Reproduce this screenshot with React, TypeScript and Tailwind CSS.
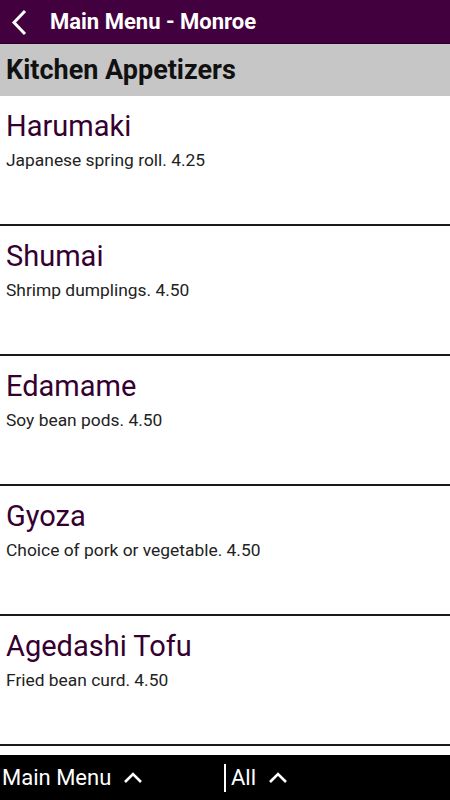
import React from 'react';

const items = [
  { name: 'Harumaki', desc: 'Japanese spring roll. 4.25' },
  { name: 'Shumai', desc: 'Shrimp dumplings. 4.50' },
  { name: 'Edamame', desc: 'Soy bean pods. 4.50' },
  { name: 'Gyoza', desc: 'Choice of pork or vegetable. 4.50' },
  { name: 'Agedashi Tofu', desc: 'Fried bean curd. 4.50' },
];

function Caret() {
  return (
    <svg width="20" height="14" viewBox="0 0 20 14" className="ml-3">
      <polyline points="2,11 10,3 18,11" fill="none" stroke="white" strokeWidth="2.6" />
    </svg>
  );
}

export default function App() {
  return (
    <div
      className="w-[450px] h-[800px] flex flex-col overflow-hidden bg-white"
      style={{ fontFamily: 'Roboto, "Liberation Sans", sans-serif' }}
    >
      <div className="h-[44px] bg-[#43003f] border-b border-[#2a0027] flex items-center shrink-0">
        <svg width="40" height="44" viewBox="0 0 40 44" className="shrink-0">
          <polyline points="25,11 14,22.5 25,34" fill="none" stroke="white" strokeWidth="3" />
        </svg>
        <span className="ml-[10px] text-white font-bold text-[22px]">Main Menu - Monroe</span>
      </div>
      <div className="h-[52px] bg-[#c6c6c6] flex items-center px-[6px] shrink-0">
        <span className="font-bold text-[27px] text-[#111]">Kitchen Appetizers</span>
      </div>
      <div className="flex-1 overflow-hidden">
        {items.map((it) => (
          <div key={it.name} className="h-[130px] border-b-2 border-[#1a1a1a] px-[6px] pt-[13px]">
            <div className="text-[29px] leading-[34px] text-[#35002f]">{it.name}</div>
            <div className="mt-[4px] text-[17.4px] text-[#222]">{it.desc}</div>
          </div>
        ))}
      </div>
      <div className="h-[45px] bg-black flex items-center shrink-0">
        <div className="w-[224px] flex items-center pl-[2px] text-white text-[22px]">
          Main Menu
          <Caret />
        </div>
        <div className="w-[2px] h-[28px] bg-white" />
        <div className="flex items-center pl-[5px] text-white text-[22px]">
          All
          <Caret />
        </div>
      </div>
    </div>
  );
}
